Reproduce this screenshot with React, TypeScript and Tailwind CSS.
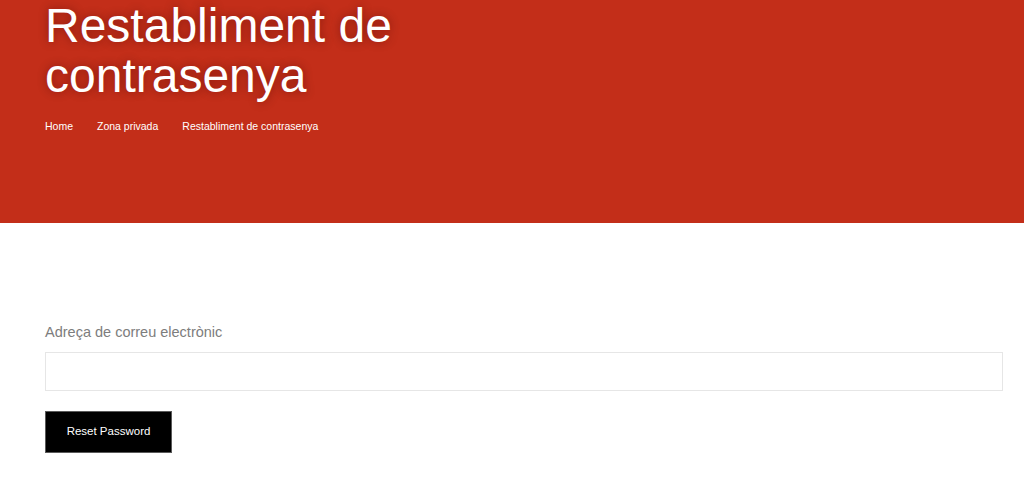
export default function App() {
  return (
    <div className="min-h-screen bg-white font-['Liberation_Sans',Arial,sans-serif]">
      {/* Page header band */}
      <header className="h-[223px] bg-[#c32e19] px-[45px] pt-px">
        <h1 className="text-[48px] leading-[50px] font-normal text-white [text-shadow:0_0_10px_rgba(60,0,0,0.45)]">
          Restabliment de
          <br />
          contrasenya
        </h1>
        <nav className="mt-[18px] flex gap-[24px] text-[10.5px] leading-[15px] text-white">
          <a href="#">Home</a>
          <a href="#">Zona privada</a>
          <span>Restabliment de contrasenya</span>
        </nav>
      </header>

      {/* Lost password form */}
      <main className="px-[45px] pr-[21px] pt-[101px]">
        <label className="block text-[14.5px] leading-[17px] text-[#7d7d7d]">
          Adreça de correu electrònic
        </label>
        <input
          type="email"
          className="mt-[11px] block h-[39px] w-full border border-[#e6e6e6] bg-white px-3 outline-none"
        />
        <button className="mt-[20px] h-[42px] w-[127px] border border-[#5a5a5a] bg-black text-[11.5px] text-white">
          Reset Password
        </button>
      </main>
    </div>
  );
}
